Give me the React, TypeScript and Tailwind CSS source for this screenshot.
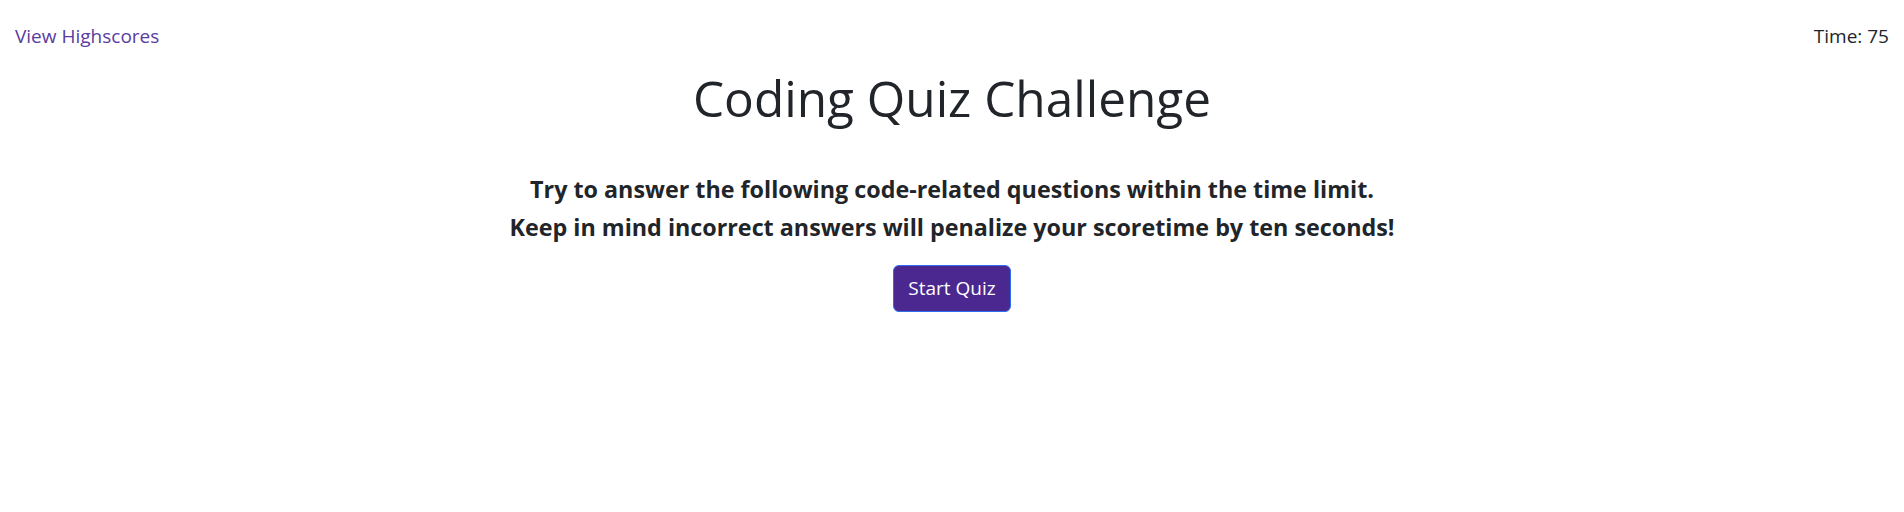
export default function App() {
  return (
    <div className="min-h-screen bg-white text-[#212529] font-['Open_Sans',sans-serif]">
      <header className="flex items-start justify-between px-[15px] pt-[22px] text-[19px] leading-[28px]">
        <a href="#" className="text-[#5a3c9f] no-underline">
          View Highscores
        </a>
        <span>Time: 75</span>
      </header>

      <main className="flex flex-col items-center text-center">
        <h1 className="mt-[19px] text-[49.5px] font-normal leading-[59px]">
          Coding Quiz Challenge
        </h1>
        <h5 className="mt-[47px] mb-[9.6px] text-[23.3px] font-bold leading-[28.8px]">
          Try to answer the following code-related questions within the time limit.
        </h5>
        <h5 className="mb-[9.6px] text-[23.3px] font-bold leading-[28.8px]">
          Keep in mind incorrect answers will penalize your scoretime by ten seconds!
        </h5>
        <button className="mt-[13px] h-[47px] rounded-[6px] border border-[#2f6df0] bg-[#4b2890] px-[14px] text-[19px] leading-[28px] text-white">
          Start Quiz
        </button>
      </main>
    </div>
  );
}
